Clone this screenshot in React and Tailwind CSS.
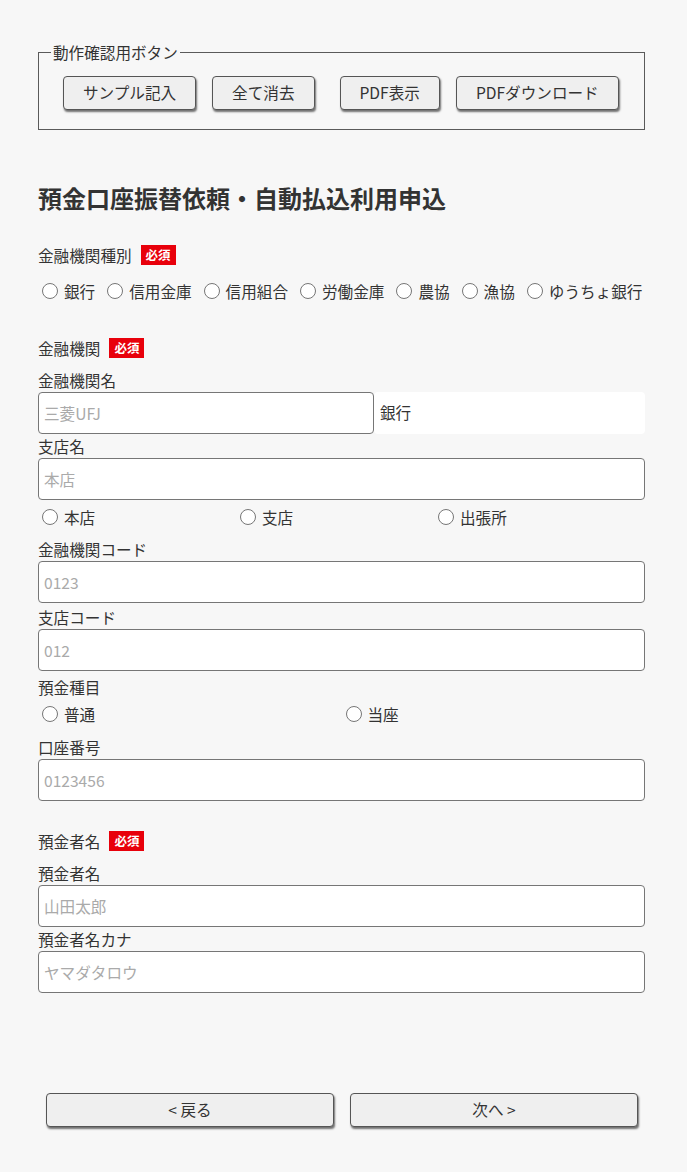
import React from 'react';

const font = { fontFamily: '"Noto Sans CJK JP", "Noto Sans", sans-serif' };

function Badge() {
  return (
    <span className="ml-[9px] inline-flex h-[20px] items-center bg-[#e8000b] px-[5px] text-[12.5px] font-bold leading-none text-white">
      必須
    </span>
  );
}

function Radio({ label, name }) {
  return (
    <label className="flex shrink-0 items-center whitespace-nowrap">
      <input
        type="radio"
        name={name}
        className="m-0 ml-[4px] h-[16px] w-[16px] shrink-0 appearance-none rounded-full border border-[#767676] bg-white"
      />
      <span className="ml-[6px]">{label}</span>
    </label>
  );
}

function TextField({ label, placeholder, className = '' }) {
  return (
    <div className={className}>
      <div className="leading-[24px]">{label}</div>
      <input
        type="text"
        placeholder={placeholder}
        className="block h-[42px] w-full rounded-[4px] border border-[#767676] bg-white px-[5px] text-[15.6px] text-[#333] placeholder:text-[#aaa] outline-none"
      />
    </div>
  );
}

function ActionButton({ children, className = '' }) {
  return (
    <button className={`h-[34px] shrink-0 whitespace-nowrap rounded-[4px] border border-[#555] bg-[#efefef] px-[19px] text-[15.6px] leading-none text-[#333] shadow-[1px_2px_2px_rgba(0,0,0,0.55)] ${className}`}>
      {children}
    </button>
  );
}

export default function App() {
  const types = ['銀行', '信用金庫', '信用組合', '労働金庫', '農協', '漁協', 'ゆうちょ銀行'];

  return (
    <div style={font} className="min-h-[1172px] bg-[#f7f7f7] text-[15.6px] text-[#333]">
      <div className="w-[607px] ml-[38px] pt-[41px] pb-[44px]">
        {/* 動作確認 */}
        <fieldset className="border border-[#5a5a5a] pl-3 pb-[19px]">
          <legend className="px-[2px] leading-[23px]">動作確認用ボタン</legend>
          <div className="ml-[12px] mt-[12px] flex items-center">
            <ActionButton>サンプル記入</ActionButton>
            <ActionButton className="ml-[16px]">全て消去</ActionButton>
            <ActionButton className="ml-[25px]">PDF表示</ActionButton>
            <ActionButton className="ml-[16px]">PDFダウンロード</ActionButton>
          </div>
        </fieldset>

        <h1 className="mt-[51px] text-[24px] font-bold leading-[34px] text-[#333]">
          預金口座振替依頼・自動払込利用申込
        </h1>

        {/* 金融機関種別 */}
        <div className="mt-[28px] flex items-center leading-[24px]">
          金融機関種別<Badge />
        </div>
        <div className="mt-[12px] flex items-center gap-[8px] leading-[24px]">
          {types.map((t) => (
            <Radio key={t} label={t} name="kind" />
          ))}
        </div>

        {/* 金融機関 */}
        <div className="mt-[33px] flex items-center leading-[24px]">
          金融機関<Badge />
        </div>
        <div className="mt-[8px]">
          <div className="leading-[24px]">金融機関名</div>
          <div className="flex">
            <input
              type="text"
              placeholder="三菱UFJ"
              className="block h-[42px] w-[336px] rounded-[4px] border border-[#767676] bg-white px-[5px] text-[15.6px] placeholder:text-[#aaa] outline-none"
            />
            <div className="flex h-[42px] flex-1 items-center rounded-[4px] bg-white pl-[6px]">銀行</div>
          </div>
        </div>
        <TextField label="支店名" placeholder="本店" />
        <div className="mt-[5px] flex leading-[24px]">
          <div className="w-[198px]"><Radio label="本店" name="branch" /></div>
          <div className="w-[198px]"><Radio label="支店" name="branch" /></div>
          <div className="w-[198px]"><Radio label="出張所" name="branch" /></div>
        </div>
        <TextField className="mt-[8px]" label="金融機関コード" placeholder="0123" />
        <TextField className="mt-[2px]" label="支店コード" placeholder="012" />
        <div className="mt-[4px] leading-[24px]">預金種目</div>
        <div className="mt-[3px] grid grid-cols-2 leading-[24px]">
          <Radio label="普通" name="deposit" />
          <Radio label="当座" name="deposit" />
        </div>
        <TextField className="mt-[9px]" label="口座番号" placeholder="0123456" />

        {/* 預金者名 */}
        <div className="mt-[28px] flex items-center leading-[24px]">
          預金者名<Badge />
        </div>
        <TextField className="mt-[8px]" label="預金者名" placeholder="山田太郎" />
        <TextField label="預金者名カナ" placeholder="ヤマダタロウ" />

        <div className="mt-[100px] flex gap-[16px] pl-[8px] pr-[7px]">
          <button className="h-[34px] flex-1 rounded-[4px] border border-[#555] bg-[#efefef] text-[15.6px] text-[#333] shadow-[1px_2px_2px_rgba(0,0,0,0.55)]">
            &lt; 戻る
          </button>
          <button className="h-[34px] flex-1 rounded-[4px] border border-[#555] bg-[#efefef] text-[15.6px] text-[#333] shadow-[1px_2px_2px_rgba(0,0,0,0.55)]">
            次へ &gt;
          </button>
        </div>
      </div>
    </div>
  );
}
